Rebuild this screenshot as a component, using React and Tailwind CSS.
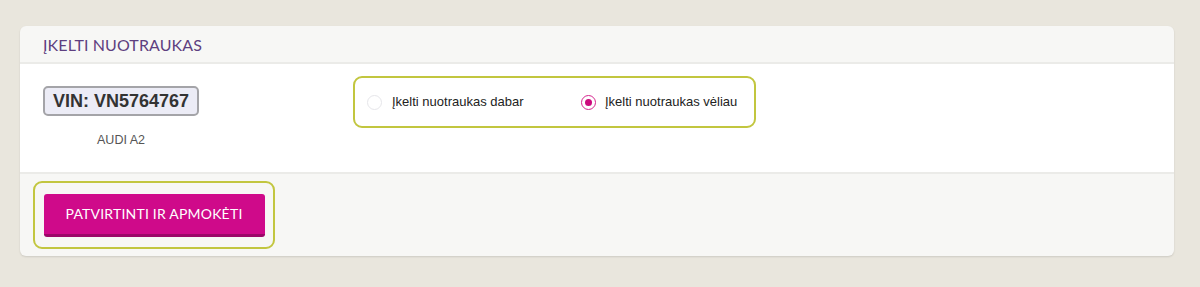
import React, { useState } from 'react';

export default function App() {
  // photo upload choice
  const [uploadNow, setUploadNow] = useState(false);

  return (
    <div className="min-h-[287px] w-full bg-[#e9e6dd] pt-[26px] pl-[20px] pr-[26px] pb-[31px]">
      <div className="rounded-[6px] bg-[#f7f7f5] shadow-[0_1px_2px_rgba(0,0,0,0.12)]">
        {/* header */}
        <div className="h-[38px] border-b-2 border-[#ebebe8] pl-[23px] pt-[11px]">
          <h2 className="text-[16px] leading-[16px] text-[#5e3f80] tracking-[0.1px]" style={{ fontFamily: '"Gill Sans", Lato, "Open Sans", sans-serif' }}>
            ĮKELTI NUOTRAUKAS
          </h2>
        </div>

        {/* body */}
        <div className="flex h-[110px] bg-white border-b-2 border-[#ebebe8]">
          <div className="w-[333px] pl-[23px] pt-[22px] flex flex-col" style={{ fontFamily: '"Liberation Sans", Arial, sans-serif' }}>
            <div className="w-[156px] h-[30px] rounded-[5px] border-2 border-[#a4a4a8] bg-[#ececf6] flex items-center justify-center text-[18px] font-bold text-[#333]">
              VIN: VN5764767
            </div>
            <div className="w-[156px] text-center text-[12.5px] text-[#555] mt-[15px]">AUDI A2</div>
          </div>
          <div className="pt-[12px]">
            <div className="w-[403px] h-[52px] rounded-[9px] border-2 border-[#c2c63f] flex items-center pl-[12px]" style={{ fontFamily: '"Liberation Sans", Arial, sans-serif' }}>
              <label className="flex items-center cursor-pointer w-[214px]" onClick={() => setUploadNow(true)}>
                <span className={`w-[15px] h-[15px] rounded-full border flex items-center justify-center ${uploadNow ? 'border-[#d6268f]' : 'border-[#e6e6ea]'}`}>
                  {uploadNow && <span className="w-[7px] h-[7px] rounded-full bg-[#cc0a7e]" />}
                </span>
                <span className="ml-[10px] text-[13px] text-[#222]">Įkelti nuotraukas dabar</span>
              </label>
              <label className="flex items-center cursor-pointer" onClick={() => setUploadNow(false)}>
                <span className={`w-[15px] h-[15px] rounded-full border flex items-center justify-center ${!uploadNow ? 'border-[#d6268f]' : 'border-[#e6e6ea]'}`}>
                  {!uploadNow && <span className="w-[7px] h-[7px] rounded-full bg-[#cc0a7e]" />}
                </span>
                <span className="ml-[9px] text-[13px] text-[#222]">Įkelti nuotraukas vėliau</span>
              </label>
            </div>
          </div>
        </div>

        {/* footer */}
        <div className="h-[82px] pl-[13px] pt-[7px]">
          <div className="w-[242px] h-[68px] rounded-[9px] border-2 border-[#c2c63f] flex items-center justify-center">
            <button className="w-[221px] h-[43px] rounded-[3px] bg-[#cf0a8a] border-b-[3px] border-[#9c0768] text-white text-[14px] tracking-[0.2px]" style={{ fontFamily: '"Gill Sans", Lato, "Open Sans", sans-serif' }}>
              PATVIRTINTI IR APMOKĖTI
            </button>
          </div>
        </div>
      </div>
    </div>
  );
}
